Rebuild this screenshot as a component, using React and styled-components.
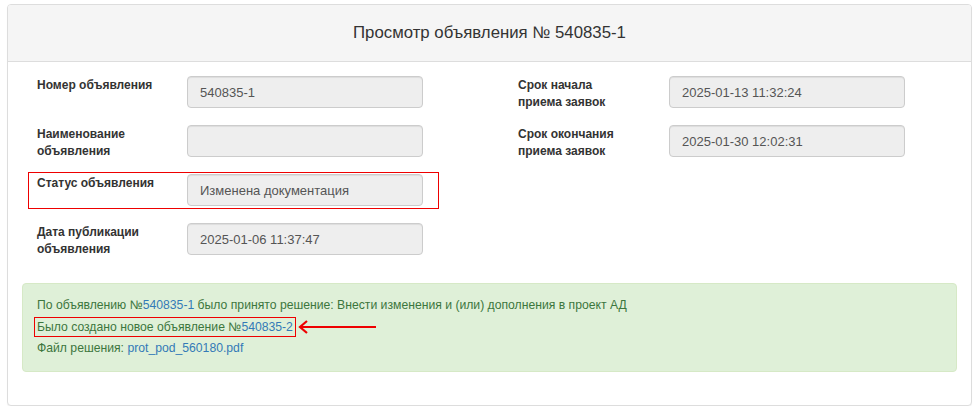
import styled, { createGlobalStyle } from "styled-components";

const GlobalStyle = createGlobalStyle`
  body {
    margin: 0;
    background: #fff;
    font-family: "Liberation Sans", Arial, sans-serif;
    color: #333;
  }
`;

const Panel = styled.div`
  margin: 4px 0 0 7px;
  width: 965px;
  height: 402px;
  border: 1px solid #ddd;
  border-radius: 4px;
  box-shadow: 0 1px 1px rgba(0, 0, 0, 0.05);
  background: #fff;
  box-sizing: border-box;
`;

const PanelHeading = styled.div`
  height: 57px;
  display: flex;
  align-items: center;
  justify-content: center;
  background: #f5f5f5;
  border-bottom: 1px solid #ddd;
  border-radius: 3px 3px 0 0;
  box-sizing: border-box;
  font-size: 16.8px;
  color: #333;
`;

const PanelBody = styled.div`
  padding: 14px 14px 0 14px;
`;

const FormGrid = styled.div`
  display: grid;
  grid-template-columns: 480px 480px;
`;

const Column = styled.div`
  display: flex;
  flex-direction: column;
  gap: 17px;
  padding-left: ${(p) => p.$pad}px;
`;

const Row = styled.div`
  position: relative;
  display: flex;
  align-items: flex-start;
  height: 32px;
`;

const Highlight = styled.div`
  position: absolute;
  left: -9px;
  top: -2px;
  width: 411px;
  height: 37px;
  border: 1px solid #e00;
  box-sizing: border-box;
`;

const Label = styled.div`
  width: ${(p) => p.$w}px;
  flex-shrink: 0;
  padding-top: 1px;
  padding-right: ${(p) => p.$w - 119}px;
  box-sizing: border-box;
  font-size: 12px;
  font-weight: bold;
  line-height: 17px;
  color: #333;
`;

const Field = styled.div`
  width: 236px;
  height: 32px;
  box-sizing: border-box;
  padding: 0 12px;
  display: flex;
  align-items: center;
  background: #eee;
  border: 1px solid #ccc;
  border-radius: 4px;
  box-shadow: inset 0 1px 1px rgba(0, 0, 0, 0.075);
  font-size: 13px;
  color: #555;
`;

const Alert = styled.div`
  margin-top: 28px;
  width: 935px;
  height: 89px;
  box-sizing: border-box;
  padding: 10px 14px;
  background: #dff0d8;
  border: 1px solid #d6e9c6;
  border-radius: 4px;
  color: #3c763d;
  font-size: 12.2px;
`;

const AlertLine = styled.div`
  line-height: 22.5px;
  display: flex;
  align-items: center;
`;

const Boxed = styled.span`
  border: 1px solid #e00;
  padding: 0 2px;
  margin-left: -3px;
  line-height: 18px;
`;

const Link = styled.a`
  color: #337ab7;
  text-decoration: none;
`;

const Arrow = styled.svg`
  margin-left: 2px;
  display: block;
`;

const left = [
  { label: "Номер объявления", value: "540835-1" },
  { label: "Наименование объявления", value: "" },
  { label: "Статус объявления", value: "Изменена документация", mark: true },
  { label: "Дата публикации объявления", value: "2025-01-06 11:37:47" },
];

const right = [
  { label: "Срок начала приема заявок", value: "2025-01-13 11:32:24" },
  { label: "Срок окончания приема заявок", value: "2025-01-30 12:02:31" },
];

const FormColumn = ({ rows, pad, labelWidth }) => (
  <Column $pad={pad}>
    {rows.map((r) => (
      <Row key={r.label}>
        {r.mark && <Highlight />}
        <Label $w={labelWidth}>{r.label}</Label>
        <Field>{r.value}</Field>
      </Row>
    ))}
  </Column>
);

export default function App() {
  return (
    <>
      <GlobalStyle />
      <Panel>
        <PanelHeading>Просмотр объявления № 540835-1</PanelHeading>
        <PanelBody>
          <FormGrid>
            <FormColumn rows={left} pad={15} labelWidth={150} />
            <FormColumn rows={right} pad={16} labelWidth={151} />
          </FormGrid>
          <Alert>
            <AlertLine>
              По объявлению №<Link href="#">540835-1</Link>&nbsp;было принято
              решение: Внести изменения и (или) дополнения в проект АД
            </AlertLine>
            <AlertLine>
              <Boxed>
                Было создано новое объявление №<Link href="#">540835-2</Link>
              </Boxed>
              <Arrow width="80" height="14" viewBox="0 0 80 14">
                <path
                  d="M2 7 H78 M9 1 L2 7 L9 13"
                  fill="none"
                  stroke="#e00"
                  strokeWidth="2.2"
                />
              </Arrow>
            </AlertLine>
            <AlertLine>
              Файл решения:&nbsp;<Link href="#">prot_pod_560180.pdf</Link>
            </AlertLine>
          </Alert>
        </PanelBody>
      </Panel>
    </>
  );
}
